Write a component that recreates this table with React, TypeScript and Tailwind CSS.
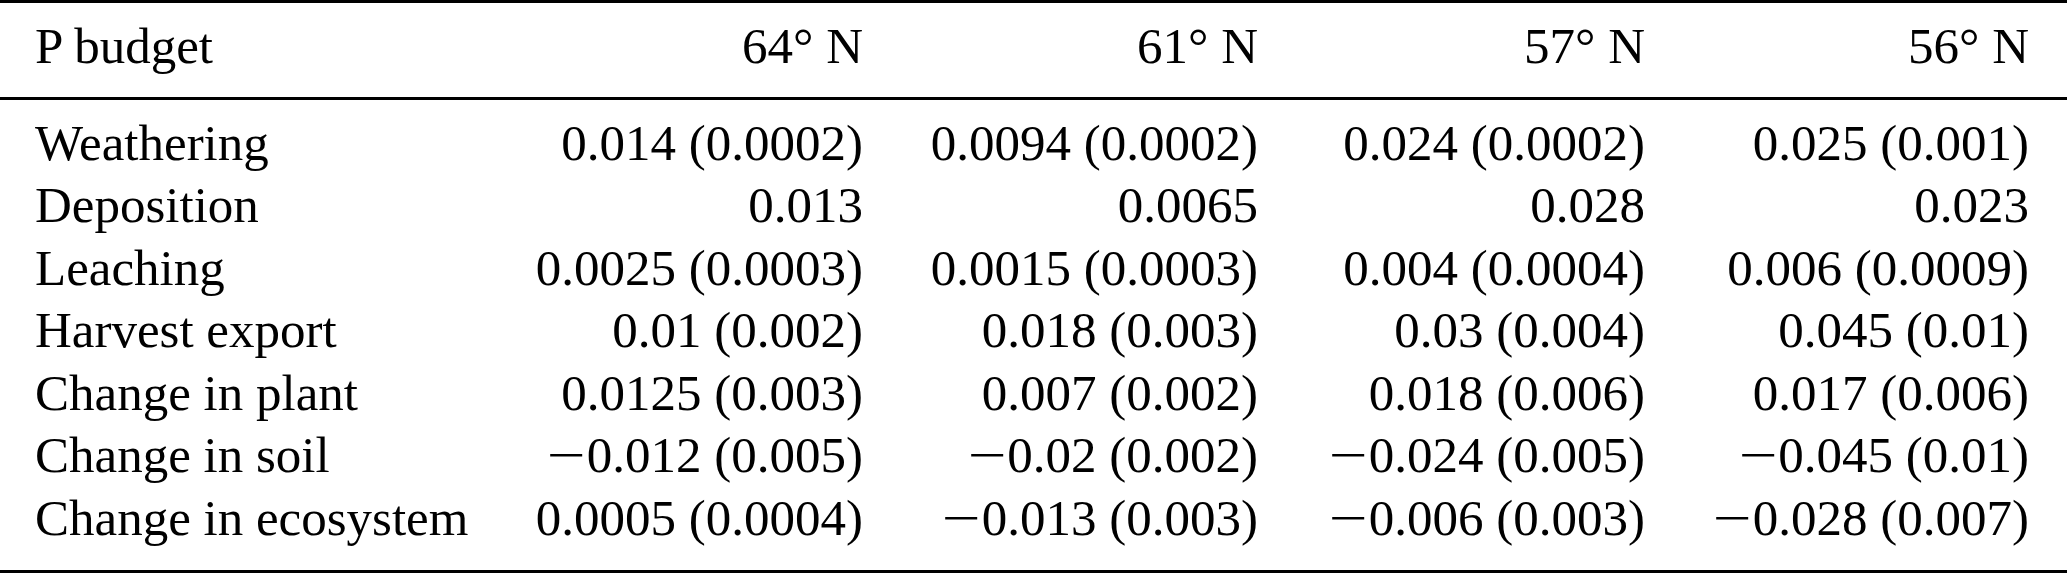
import React from "react";

const header = ["P budget", "64° N", "61° N", "57° N", "56° N"];

const rows: string[][] = [
  ["Weathering", "0.014 (0.0002)", "0.0094 (0.0002)", "0.024 (0.0002)", "0.025 (0.001)"],
  ["Deposition", "0.013", "0.0065", "0.028", "0.023"],
  ["Leaching", "0.0025 (0.0003)", "0.0015 (0.0003)", "0.004 (0.0004)", "0.006 (0.0009)"],
  ["Harvest export", "0.01 (0.002)", "0.018 (0.003)", "0.03 (0.004)", "0.045 (0.01)"],
  ["Change in plant", "0.0125 (0.003)", "0.007 (0.002)", "0.018 (0.006)", "0.017 (0.006)"],
  ["Change in soil", "\u22120.012 (0.005)", "\u22120.02 (0.002)", "\u22120.024 (0.005)", "\u22120.045 (0.01)"],
  ["Change in ecosystem", "0.0005 (0.0004)", "\u22120.013 (0.003)", "\u22120.006 (0.003)", "\u22120.028 (0.007)"],
];

const gridCls =
  "grid grid-cols-[463px_400px_395px_387px_384px_38px] leading-[62.5px]";

function Value({ text }: { text: string }) {
  if (text.startsWith("\u2212")) {
    return (
      <>
        <span className="inline-block w-[40px] text-center">
          <span className="inline-block scale-x-[1.35]">{"\u2212"}</span>
        </span>
        {text.slice(1)}
      </>
    );
  }
  return <>{text}</>;
}

function Row({ cells }: { cells: string[] }) {
  return (
    <div className={gridCls}>
      <div className="pl-[35px] whitespace-nowrap">{cells[0]}</div>
      {cells.slice(1).map((c, i) => (
        <div key={i} className="text-right whitespace-nowrap">
          <Value text={c} />
        </div>
      ))}
      <div />
    </div>
  );
}

export default function App() {
  return (
    <div
      className="w-[2067px] h-[573px] bg-white text-black text-[51px]"
      style={{ fontFamily: '"Liberation Serif", "Times New Roman", serif' }}
    >
      <div className="border-t-[3px] border-b-[3px] border-black h-[573px] flex flex-col">
        <div className="pt-[12px] h-[97px] border-b-[3px] border-black">
          <Row cells={header} />
        </div>
        <div className="pt-[11.5px]">
          {rows.map((r, i) => (
            <Row key={i} cells={r} />
          ))}
        </div>
      </div>
    </div>
  );
}
